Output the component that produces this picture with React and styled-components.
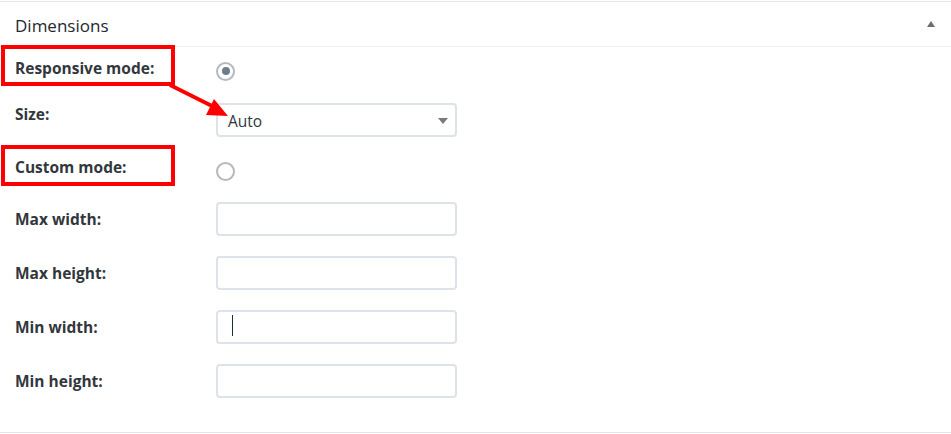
import React from "react";
import styled, { createGlobalStyle } from "styled-components";

const Global = createGlobalStyle`
  html, body { margin: 0; padding: 0; background: #fff; }
  body { font-family: "Open Sans", "Noto Sans", sans-serif; color: #23282d; }
`;

const Page = styled.div`
  position: relative;
  width: 951px;
  height: 434px;
  overflow: hidden;
  padding-top: 1px;
  box-sizing: border-box;
`;

const Panel = styled.section`
  border-top: 1px solid #e2e4e7;
  border-bottom: 1px solid #e2e4e7;
  background: #fff;
`;

const Header = styled.header`
  height: 44px;
  display: flex;
  align-items: center;
  justify-content: space-between;
  padding: 0 15px;
  border-bottom: 1px solid #eeeeee;
`;

const Title = styled.h2`
  margin: 0;
  font-size: 17px;
  font-weight: 400;
  color: #23282d;
  transform: translateY(1px);
`;

const Toggle = styled.span`
  width: 0;
  height: 0;
  margin-right: 1px;
  border-left: 4.5px solid transparent;
  border-right: 4.5px solid transparent;
  border-bottom: 6px solid #6b6f73;
`;

const Body = styled.div`
  padding-bottom: 24px;
`;

const Row = styled.div`
  display: grid;
  grid-template-columns: 216px 1fr;
  align-items: center;
  height: ${(p) => p.$h}px;
`;

const LabelCell = styled.div`
  position: relative;
  height: 100%;
  display: flex;
  align-items: center;
  padding-left: 15px;
  ${(p) =>
    p.$boxTop !== undefined &&
    `
    &::after {
      content: "";
      position: absolute;
      left: 1px;
      top: ${p.$boxTop}px;
      width: 166px;
      height: 33px;
      border: 4px solid #ff0000;
      pointer-events: none;
    }
  `}
`;

const Label = styled.label`
  font-size: 15.5px;
  font-weight: 700;
  color: #32373c;
  transform: translateY(${(p) => p.$shift || 0}px);
`;

const FieldCell = styled.div`
  display: flex;
  align-items: center;
  transform: translateY(${(p) => p.$shift || 0}px);
`;

const Radio = styled.span`
  box-sizing: border-box;
  width: 19px;
  height: 19px;
  border-radius: 50%;
  border: 2.5px solid #b4b9be;
  display: flex;
  align-items: center;
  justify-content: center;
  &::after {
    content: "";
    width: 8px;
    height: 8px;
    border-radius: 50%;
    background: ${(p) => (p.$checked ? "#6b7f88" : "transparent")};
  }
`;

const Select = styled.div`
  box-sizing: border-box;
  width: 241px;
  height: 34px;
  border: 2px solid #dde3ea;
  border-radius: 4px;
  display: flex;
  align-items: center;
  justify-content: space-between;
  padding: 2px 7px 0 10px;
  font-size: 15.5px;
  color: #32373c;
`;

const Caret = styled.span`
  width: 0;
  height: 0;
  border-left: 5px solid transparent;
  border-right: 5px solid transparent;
  border-top: 6px solid #7a7a7a;
`;

const Input = styled.div`
  position: relative;
  box-sizing: border-box;
  width: 241px;
  height: 34px;
  border: 2px solid #dde3ea;
  border-radius: 4px;
  background: #fff;
`;

const TextCaret = styled.span`
  position: absolute;
  left: 14px;
  top: 3px;
  width: 1px;
  height: 21px;
  background: #1d2b3a;
`;

const Annotation = styled.svg`
  position: absolute;
  left: 0;
  top: 0;
  pointer-events: none;
`;

export default function App() {
  const inputs = [
    { label: "Max width:" },
    { label: "Max height:" },
    { label: "Min width:", caret: true },
    { label: "Min height:" },
  ];
  return (
    <>
      <Global />
      <Page>
        <Panel>
          <Header>
            <Title>Dimensions</Title>
            <Toggle />
          </Header>
          <Body>
            <Row $h={48}>
              <LabelCell $boxTop={-2}>
                <Label $shift={-3}>Responsive mode:</Label>
              </LabelCell>
              <FieldCell>
                <Radio $checked />
              </FieldCell>
            </Row>
            <Row $h={48}>
              <LabelCell>
                <Label $shift={-5}>Size:</Label>
              </LabelCell>
              <FieldCell $shift={1}>
                <Select>
                  <span>Auto</span>
                  <Caret />
                </Select>
              </FieldCell>
            </Row>
            <Row $h={49}>
              <LabelCell $boxTop={2}>
                <Label $shift={-1}>Custom mode:</Label>
              </LabelCell>
              <FieldCell $shift={4}>
                <Radio />
              </FieldCell>
            </Row>
            {inputs.map((it) => (
              <Row $h={54} key={it.label}>
                <LabelCell>
                  <Label>{it.label}</Label>
                </LabelCell>
                <FieldCell>
                  <Input>{it.caret && <TextCaret />}</Input>
                </FieldCell>
              </Row>
            ))}
          </Body>
        </Panel>
        <Annotation width="951" height="434" viewBox="0 0 951 434">
          <line x1="170" y1="85" x2="212" y2="106" stroke="#ff0000" strokeWidth="4" />
          <polygon points="228,116 206,115 214,99" fill="#ff0000" />
        </Annotation>
      </Page>
    </>
  );
}
